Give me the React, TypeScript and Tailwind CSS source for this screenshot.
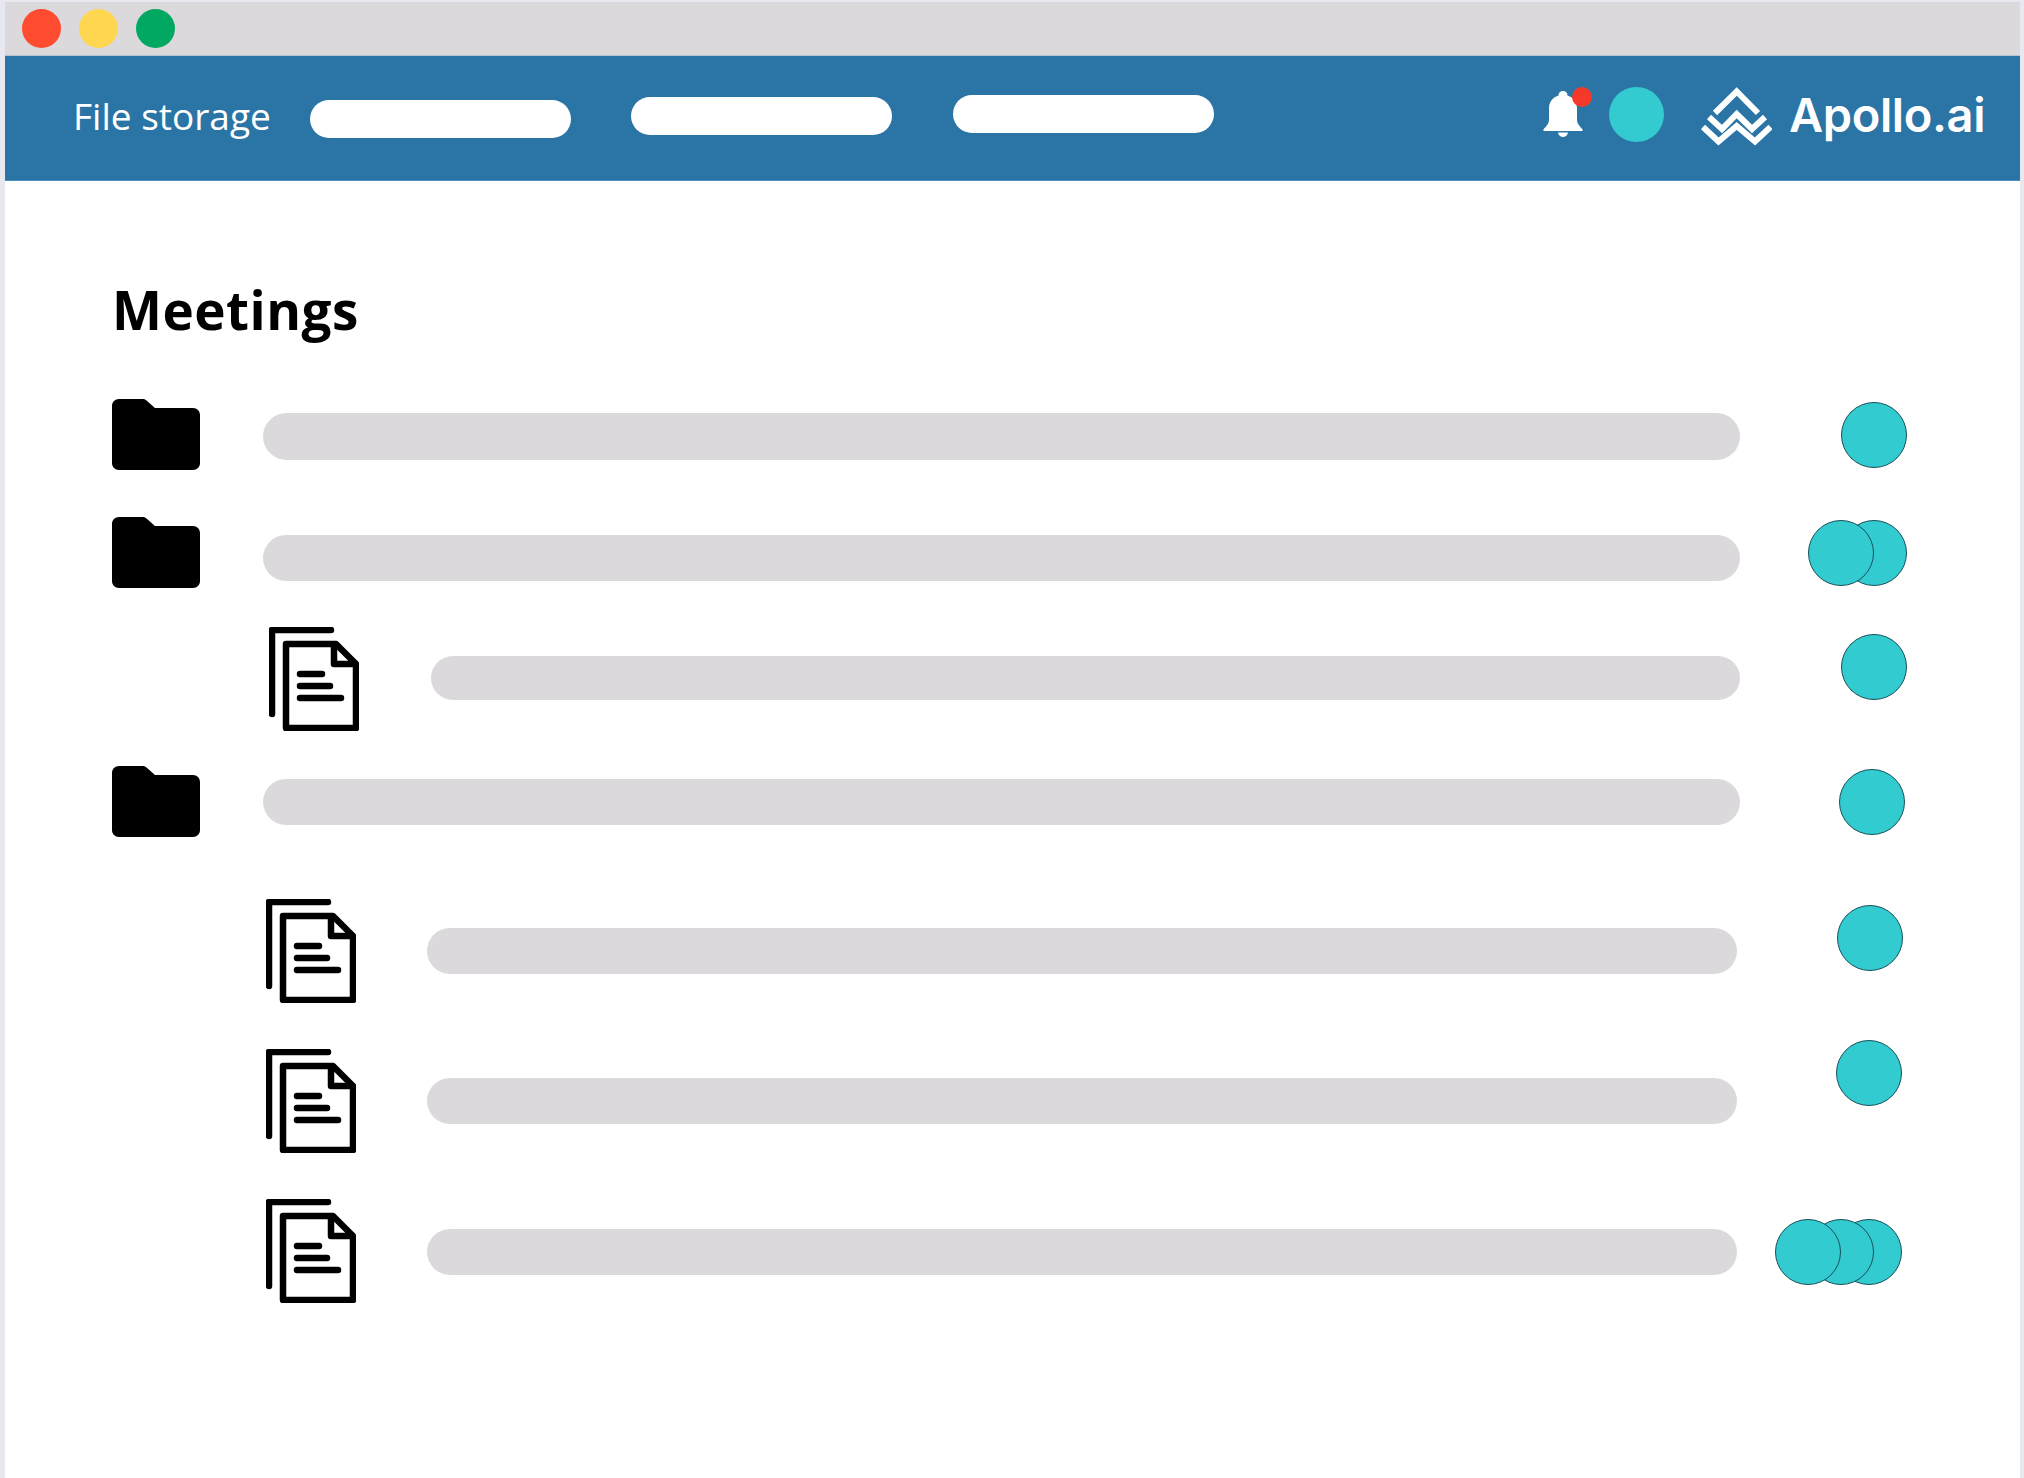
const dot = 'w-[66px] h-[66px] shrink-0 rounded-full bg-[#32cbcf] border border-[#17505a]';

function Folder() {
  return (
    <svg viewBox="0 0 88 71" className="w-[88px] h-[71px] shrink-0">
      <path d="M7 0h24c1.500 0 2.500.6 3.500 1.600L43 9h38c4 0 7 3 7 7v48c0 4-3 7-7 7H7c-4 0-7-3-7-7V7c0-4 3-7 7-7z" fill="#000" />
    </svg>
  );
}

function Doc() {
  return (
    <svg viewBox="0 0 90 104" className="w-[90px] h-[104px] shrink-0" fill="none" stroke="#000" strokeWidth="6.500" strokeLinecap="round" strokeLinejoin="round">
      <path d="M3 87V3h59" />
      <path d="M17 17h50l20 20v64H17z" />
      <path d="M65 18v19h21" />
      <path d="M31 47h22M31 59h30M31 71h41" />
    </svg>
  );
}

function Bar({ className }: { className: string }) {
  return <div className={`shrink-0 rounded-full bg-[#dbd9dc] ${className}`} />;
}

function Row({ className, children }: { className: string; children: React.ReactNode }) {
  return <div className={`flex items-start ${className}`}>{children}</div>;
}

export default function App() {
  return (
    <div className="w-[2024px] h-[1478px] overflow-hidden bg-[#e8e8f1] pl-[5px] pr-[4px] pt-[2px] font-['Open_Sans',sans-serif]">
      <div className="h-full bg-white">
        <div className="h-[54px] bg-[#dbd9dc] border-b border-[#b9c3d0] flex items-start pt-[7px] pl-[17px] gap-[18px]">
          <div className="w-[39px] h-[39px] rounded-full bg-[#ff4b2f]" />
          <div className="w-[39px] h-[39px] rounded-full bg-[#ffd650]" />
          <div className="w-[39px] h-[39px] rounded-full bg-[#00a862]" />
        </div>

        <div className="h-[125px] bg-[#2a75a5] border-b border-[#4a8fbd] flex items-start pl-[68px] text-white">
          <span className="mt-[36px] text-[37px] leading-[48px] w-[237px] shrink-0">File storage</span>
          <div className="mt-[44px] w-[261px] h-[38px] rounded-full bg-white shrink-0" />
          <div className="mt-[41px] ml-[60px] w-[261px] h-[38px] rounded-full bg-white shrink-0" />
          <div className="mt-[39px] ml-[61px] w-[261px] h-[38px] rounded-full bg-white shrink-0" />
          <div className="relative mt-[35px] ml-[329px] w-[42px] h-[48px] shrink-0">
            <svg viewBox="0 0 40 46" className="w-[40px] h-[46px]" fill="#fff">
              <path d="M20 0c2.800 0 4.500 2 4.500 4.400C31 6.500 34 11 34 18v11c0 3.500 2.500 6 5.500 9.300V40H.5v-1.700C3.500 35 6 32.500 6 29V18C6 11 9 6.500 15.500 4.400 15.500 2 17.200 0 20 0z" />
              <path d="M15 41.500h10c-.5 2.800-2.500 4.500-5 4.500s-4.500-1.700-5-4.500z" />
            </svg>
            <div className="absolute left-[29px] top-[-4px] w-[20px] h-[20px] rounded-full bg-[#f4392a]" />
          </div>
          <div className="mt-[31px] ml-[24px] w-[55px] h-[55px] rounded-full bg-[#33cbd0] shrink-0" />
          <svg viewBox="0 0 72 60" className="mt-[30px] ml-[36px] w-[72px] h-[60px] shrink-0" fill="none" stroke="#fff" strokeWidth="6">
            <path d="M15 27 36.700 5.500 58 27" />
            <path d="M9 31l13 12L36.700 28 52 43l13-12" />
            <path d="M3 41l15.500 14.500L36.700 40 55 55.500 70.500 41" />
          </svg>
          <span className="mt-[25px] ml-[17px] text-[47px] leading-[68px] font-semibold font-['Inter',sans-serif] tracking-[-0.4px]">Apollo.ai</span>
        </div>

        <div className="pl-[107px] pr-[90px]">
          <h1 className="mt-[94px] text-[53px] leading-[70px] font-bold text-black tracking-[0.5px]">Meetings</h1>

          <Row className="mt-[54px] h-[71px]">
            <Folder />
            <Bar className="mt-[14px] ml-[63px] w-[1477px] h-[47px]" />
            <div className={`mt-[3px] ml-[101px] ${dot}`} />
          </Row>

          <Row className="mt-[47px] h-[71px]">
            <Folder />
            <Bar className="mt-[18px] ml-[63px] w-[1477px] h-[46px]" />
            <div className="mt-[3px] ml-[68px] flex">
              <div className={`relative z-10 ${dot}`} />
              <div className={`-ml-[33px] ${dot}`} />
            </div>
          </Row>

          <Row className="mt-[39px] h-[104px] pl-[157px]">
            <Doc />
            <Bar className="mt-[29px] ml-[72px] w-[1309px] h-[44px]" />
            <div className={`mt-[7px] ml-[101px] ${dot}`} />
          </Row>

          <Row className="mt-[35px] h-[72px]">
            <Folder />
            <Bar className="mt-[13px] ml-[63px] w-[1477px] h-[46px]" />
            <div className={`mt-[3px] ml-[99px] ${dot}`} />
          </Row>

          <Row className="mt-[61px] h-[104px] pl-[154px]">
            <Doc />
            <Bar className="mt-[29px] ml-[71px] w-[1310px] h-[46px]" />
            <div className={`mt-[6px] ml-[100px] ${dot}`} />
          </Row>

          <Row className="mt-[46px] h-[104px] pl-[154px]">
            <Doc />
            <Bar className="mt-[29px] ml-[71px] w-[1310px] h-[46px]" />
            <div className={`-mt-[9px] ml-[99px] ${dot}`} />
          </Row>

          <Row className="mt-[46px] h-[104px] pl-[154px]">
            <Doc />
            <Bar className="mt-[30px] ml-[71px] w-[1310px] h-[46px]" />
            <div className="mt-[20px] ml-[38px] flex">
              <div className={`relative z-20 ${dot}`} />
              <div className={`relative z-10 -ml-[33px] ${dot}`} />
              <div className={`-ml-[38px] ${dot}`} />
            </div>
          </Row>
        </div>
      </div>
    </div>
  );
}
